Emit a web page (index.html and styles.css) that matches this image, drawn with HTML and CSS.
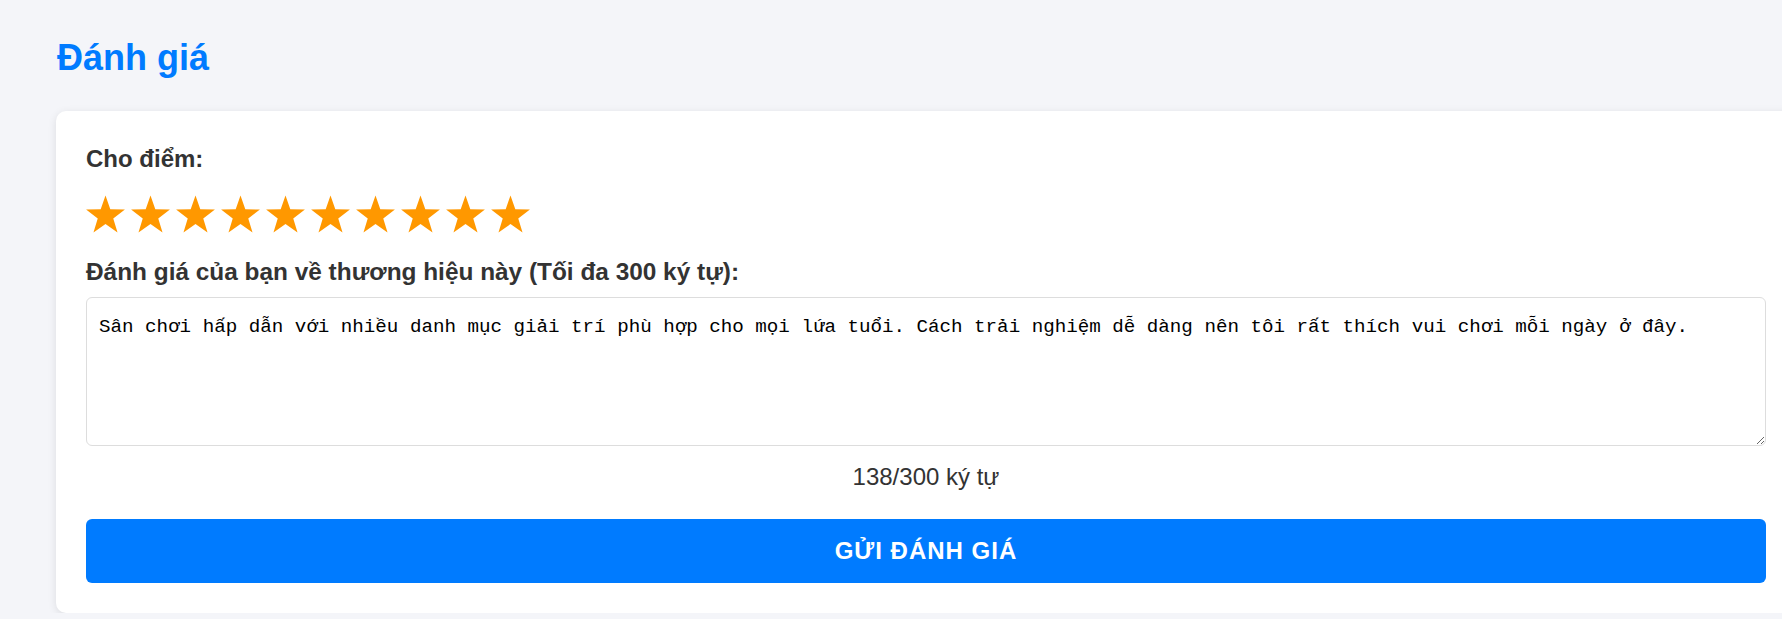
FILE: index.html
```html
<!DOCTYPE html>
<html>
<head>
    <meta charset="utf-8">
    <link rel="stylesheet" href="styles.css">
</head>
<body>
    <div class="page">
        <h1 class="title">Đánh giá</h1>
        <div class="card">
            <label class="label">Cho điểm:</label>
            <div class="stars">
                <svg class="star" viewBox="1.5 1.6 21 20"><polygon points="12,1.6 14.59,9.04 22.46,9.2 16.18,13.96 18.47,21.5 12,17 5.53,21.5 7.82,13.96 1.54,9.2 9.41,9.04"/></svg>
                <svg class="star" viewBox="1.5 1.6 21 20"><polygon points="12,1.6 14.59,9.04 22.46,9.2 16.18,13.96 18.47,21.5 12,17 5.53,21.5 7.82,13.96 1.54,9.2 9.41,9.04"/></svg>
                <svg class="star" viewBox="1.5 1.6 21 20"><polygon points="12,1.6 14.59,9.04 22.46,9.2 16.18,13.96 18.47,21.5 12,17 5.53,21.5 7.82,13.96 1.54,9.2 9.41,9.04"/></svg>
                <svg class="star" viewBox="1.5 1.6 21 20"><polygon points="12,1.6 14.59,9.04 22.46,9.2 16.18,13.96 18.47,21.5 12,17 5.53,21.5 7.82,13.96 1.54,9.2 9.41,9.04"/></svg>
                <svg class="star" viewBox="1.5 1.6 21 20"><polygon points="12,1.6 14.59,9.04 22.46,9.2 16.18,13.96 18.47,21.5 12,17 5.53,21.5 7.82,13.96 1.54,9.2 9.41,9.04"/></svg>
                <svg class="star" viewBox="1.5 1.6 21 20"><polygon points="12,1.6 14.59,9.04 22.46,9.2 16.18,13.96 18.47,21.5 12,17 5.53,21.5 7.82,13.96 1.54,9.2 9.41,9.04"/></svg>
                <svg class="star" viewBox="1.5 1.6 21 20"><polygon points="12,1.6 14.59,9.04 22.46,9.2 16.18,13.96 18.47,21.5 12,17 5.53,21.5 7.82,13.96 1.54,9.2 9.41,9.04"/></svg>
                <svg class="star" viewBox="1.5 1.6 21 20"><polygon points="12,1.6 14.59,9.04 22.46,9.2 16.18,13.96 18.47,21.5 12,17 5.53,21.5 7.82,13.96 1.54,9.2 9.41,9.04"/></svg>
                <svg class="star" viewBox="1.5 1.6 21 20"><polygon points="12,1.6 14.59,9.04 22.46,9.2 16.18,13.96 18.47,21.5 12,17 5.53,21.5 7.82,13.96 1.54,9.2 9.41,9.04"/></svg>
                <svg class="star" viewBox="1.5 1.6 21 20"><polygon points="12,1.6 14.59,9.04 22.46,9.2 16.18,13.96 18.47,21.5 12,17 5.53,21.5 7.82,13.96 1.54,9.2 9.41,9.04"/></svg>
            </div>
            <label class="label label-review">Đánh giá của bạn về thương hiệu này (Tối đa 300 ký tự):</label>
            <textarea class="review">Sân chơi hấp dẫn với nhiều danh mục giải trí phù hợp cho mọi lứa tuổi. Cách trải nghiệm dễ dàng nên tôi rất thích vui chơi mỗi ngày ở đây.</textarea>
            <div class="counter">138/300 ký tự</div>
            <button class="submit">GỬI ĐÁNH GIÁ</button>
        </div>
    </div>
</body>
</html>
```

FILE: styles.css
```css
body {
    margin: 0;
    padding: 0;
    background-color: #f4f5f9;
    font-family: "Liberation Sans", Arial, sans-serif;
    color: #333;
    overflow: hidden;
}

.page {
    padding: 37px 0 0 56px;
    width: 1740px;
}

.title {
    margin: 0 0 32px 1px;
    font-size: 36px;
    font-weight: bold;
    color: #007bff;
}

.card {
    display: flex;
    flex-direction: column;
    padding: 30px;
    background-color: #fff;
    border-radius: 10px;
    box-shadow: 0 2px 8px rgba(0, 0, 0, 0.1);
}

.label {
    font-size: 24px;
    font-weight: bold;
    line-height: 36px;
}

.stars {
    display: flex;
    gap: 6px;
    margin-top: 18px;
}

.star {
    width: 39px;
    height: 38px;
    fill: #ff9800;
}

.label-review {
    margin-top: 21px;
    font-size: 24.4px;
}

.review {
    box-sizing: border-box;
    width: 100%;
    height: 149px;
    margin-top: 7px;
    padding: 18px 12px 14px;
    border: 1px solid #ddd;
    border-radius: 6px;
    font-family: "Liberation Mono", "DejaVu Sans Mono", monospace;
    font-size: 19.2px;
    color: #000;
}

.counter {
    margin-top: 17px;
    text-align: center;
    font-size: 24px;
}

.submit {
    height: 64px;
    margin-top: 28px;
    border: none;
    border-radius: 6px;
    background-color: #007bff;
    color: #fff;
    font-family: "Liberation Sans", Arial, sans-serif;
    font-size: 24px;
    font-weight: bold;
    letter-spacing: 1px;
    cursor: pointer;
}
```
